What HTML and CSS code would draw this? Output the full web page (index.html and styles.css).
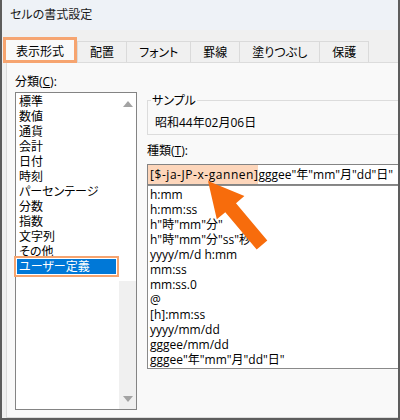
FILE: index.html
```html
<!DOCTYPE html>
<html lang="ja">
<head>
<meta charset="utf-8">
<link rel="stylesheet" href="styles.css">
</head>
<body>
<div class="window">
  <div class="titlebar">セルの書式設定</div>
  <div class="tabs">
    <div class="tab active">表示形式</div>
    <div class="tab">配置</div>
    <div class="tab">フォント</div>
    <div class="tab">罫線</div>
    <div class="tab">塗りつぶし</div>
    <div class="tab">保護</div>
  </div>
  <div class="panel">
    <div class="col-left">
      <div class="label">分類(<u>C</u>):</div>
      <div class="listbox cat">
        <ul class="items">
          <li>標準</li>
          <li>数値</li>
          <li>通貨</li>
          <li>会計</li>
          <li>日付</li>
          <li>時刻</li>
          <li>パーセンテージ</li>
          <li>分数</li>
          <li>指数</li>
          <li>文字列</li>
          <li>その他</li>
          <li class="selected">ユーザー定義</li>
        </ul>
        <div class="scrollbar">
          <span class="sarrow up"></span>
          <span class="spacer"></span>
          <span class="lower"><span class="sarrow down"></span></span>
        </div>
      </div>
    </div>
    <div class="col-right">
      <fieldset class="sample">
        <legend>サンプル</legend>
        <div class="sample-text">昭和44年02月06日</div>
      </fieldset>
      <div class="label type-label">種類(<u>T</u>):</div>
      <div class="input"><span class="hl">[$-ja-JP-x-gannen]</span>gggee"年"mm"月"dd"日"</div>
      <ul class="listbox types">
        <li>h:mm</li>
        <li>h:mm:ss</li>
        <li>h"時"mm"分"</li>
        <li>h"時"mm"分"ss"秒"</li>
        <li>yyyy/m/d h:mm</li>
        <li>mm:ss</li>
        <li>mm:ss.0</li>
        <li>@</li>
        <li>[h]:mm:ss</li>
        <li>yyyy/mm/dd</li>
        <li>gggee/mm/dd</li>
        <li>gggee"年"mm"月"dd"日"</li>
      </ul>
    </div>
  </div>
  <svg class="pointer" viewBox="2 0 396 420" width="396" height="420" aria-hidden="true">
    <polygon points="208,181 244.4,196.1 236,203.2 267.3,240.5 256.7,249.5 225.3,212.2 216.8,219.3" fill="#f76c0c"/>
  </svg>
</div>
</body>
</html>
```

FILE: styles.css
```css
* { box-sizing: border-box; }
html, body { margin: 0; padding: 0; background: #f9f9f9; }
body {
  font-family: "Open Sans", "Noto Sans CJK JP", sans-serif;
  font-size: 12px;
  color: #000;
  font-feature-settings: "palt";
}
ul { list-style: none; margin: 0; padding: 0; }

.window {
  position: relative;
  width: 400px;
  height: 420px;
  border: 2px solid #5d5d5d;
  border-top: none;
  overflow: hidden;
  background: #f0f0f0;
  display: flex;
  flex-direction: column;
}

.titlebar {
  height: 30px;
  line-height: 30px;
  padding-left: 8px;
  background: #eef2f7;
  color: #1a1a1a;
  flex: none;
}

.tabs {
  height: 32px;
  flex: none;
  display: flex;
  align-items: flex-end;
  padding-left: 1px;
  background: #f0f0f0;
}
.tab {
  height: 21px;
  display: flex;
  align-items: center;
  padding: 0 12px;
  border: 1px solid #dadada;
  border-bottom: none;
  margin-left: -1px;
  background: #f0f0f0;
  line-height: 15px;
}
.tab.active {
  position: relative;
  z-index: 2;
  height: 26px;
  margin-left: 0;
  margin-bottom: -1px;
  padding: 2px 10px 0;
  border: 3px solid #f6a46f;
  background: #f9f9f9;
}
.tab.active + .tab { margin-left: 0; }

.panel {
  flex: 1;
  display: flex;
  margin-left: 4px;
  border: 1px solid #dcdcdc;
  border-right: none;
  background: #f9f9f9;
}

.label { line-height: 15px; height: 15px; }
.label u { text-underline-offset: 1px; }

.col-left {
  flex: none;
  padding-left: 8px;
  display: flex;
  flex-direction: column;
}
.col-left .label { margin-top: 11px; margin-bottom: 3px; }

.listbox {
  background: #fff;
  border: 1px solid #848484;
}
.cat {
  position: relative;
  width: 122px;
  height: 318px;
  padding-top: 1px;
}
.cat .items {
  width: 99px;
  margin-left: 1px;
}
.cat li {
  line-height: 15px;
  height: 15px;
  padding-left: 2px;
  white-space: nowrap;
}
.cat li.selected {
  background: #0078d7;
  color: #fff;
  outline: 2px solid #f6a46f;
  outline-offset: 1px;
}
.scrollbar {
  position: absolute;
  top: 0;
  right: 0;
  bottom: 0;
  width: 17px;
  display: flex;
  flex-direction: column;
  align-items: center;
  padding-top: 8px;
  background: #fff;
}
.scrollbar .spacer { flex: 1; }
.scrollbar .lower {
  align-self: stretch;
  height: 128px;
  display: flex;
  align-items: flex-end;
  justify-content: center;
  padding-bottom: 7px;
  background: #f0f0f0;
}
.sarrow {
  width: 0;
  height: 0;
  border-left: 5px solid transparent;
  border-right: 5px solid transparent;
}
.sarrow.up { border-bottom: 6px solid #a3a3a3; }
.sarrow.down { border-top: 6px solid #a3a3a3; }

.col-right {
  flex: none;
  width: 280px;
  margin-left: 10px;
  padding-top: 30px;
}
.sample {
  margin: 0;
  padding: 0 8px 4px 3px;
  border: 1px solid #dcdcdc;
}
.sample legend {
  padding: 0 1px;
  line-height: 15px;
}
.sample-text {
  margin-top: 7px;
  padding-left: 4px;
  line-height: 15px;
  height: 15px;
}
.type-label { margin-top: 8px; margin-bottom: 6px; }

.input {
  height: 21px;
  border: 1px solid #848484;
  background: #fff;
  line-height: 19px;
  white-space: nowrap;
  overflow: hidden;
}
.input .hl {
  display: inline-block;
  background: #fdd6bb;
  padding-left: 2px;
  letter-spacing: 0.55px;
}
.types {
  height: 184px;
  padding: 1px 0 0 2px;
  border-color: #8a8a8a;
}
.types li {
  line-height: 15px;
  height: 15px;
  white-space: nowrap;
}

.pointer {
  position: absolute;
  left: 0;
  top: 0;
  pointer-events: none;
  z-index: 5;
}
```
